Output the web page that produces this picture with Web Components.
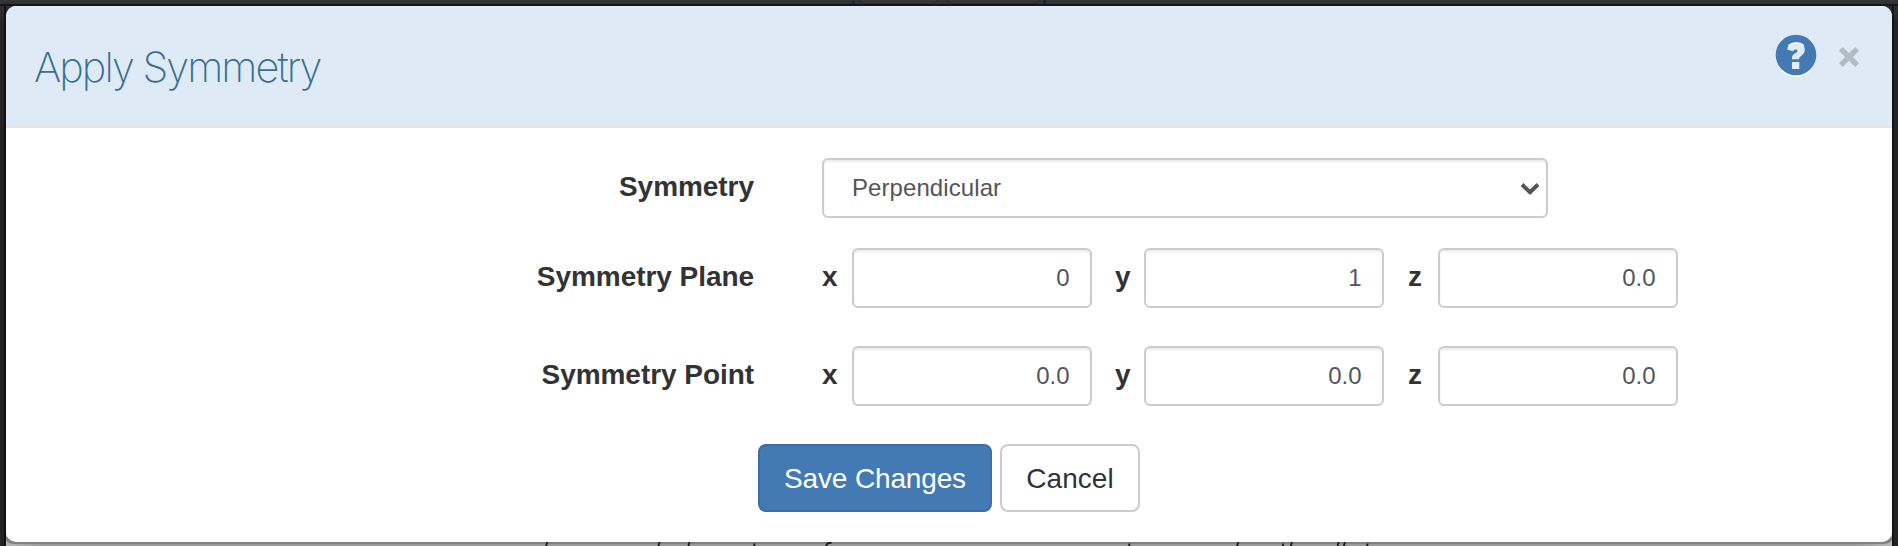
<!DOCTYPE html>
<html lang="en"><head><meta charset="utf-8"><title>Apply Symmetry</title>
<style>html,body{margin:0;width:1898px;height:546px;overflow:hidden;font-family:"Liberation Sans",Arial,sans-serif;color:#333}</style></head>
<body>
<app-backdrop>
<modal-dialog>
<span slot="title">Apply Symmetry</span>
<form-row label="Symmetry"><select-field>Perpendicular</select-field></form-row>
<form-row label="Symmetry Plane" style="--gap:30px"><axis-field axis="x" value="0"></axis-field><axis-field axis="y" value="1"></axis-field><axis-field axis="z" value="0.0"></axis-field></form-row>
<form-row label="Symmetry Point" style="--gap:38px"><axis-field axis="x" value="0.0"></axis-field><axis-field axis="y" value="0.0"></axis-field><axis-field axis="z" value="0.0"></axis-field></form-row>
<action-button slot="actions" primary style="width:234px;--ls:-.15px">Save Changes</action-button>
<action-button slot="actions" style="width:140px;--ls:.05px">Cancel</action-button>
</modal-dialog>
</app-backdrop>
<script>
const define=(name,html,init)=>customElements.define(name,class extends HTMLElement{
  connectedCallback(){if(this.shadowRoot)return;const r=this.attachShadow({mode:'open'});r.innerHTML=html;if(init)init(this,r);}
});
define('app-backdrop',`<style>
:host{display:block;box-sizing:border-box;position:relative;width:1898px;height:546px;padding:6px 6px 4px;background:linear-gradient(#323436,#232323 24px)}
svg{position:absolute;left:0;top:0}
slot{display:block;position:relative}
</style>
<svg width="1898" height="546">
<rect x="859" width="78" height="10" y="-6" rx="7" fill="#363636" stroke="#282a2b"/><rect x="947" width="92" height="10" y="-6" rx="7" fill="#363636" stroke="#282a2b"/>
<path d="M853 1l1 4M1045 0l-1 5" stroke="#15232b" stroke-width="2"/>
<rect x="0" y="4" width="1898" height="2" fill="#171617"/>
<rect x="4" y="6" width="2" height="540" fill="#111"/><rect x="1892" y="6" width="2" height="540" fill="#141414"/>
<defs><linearGradient id="g"><stop offset="0" stop-color="#b5b5b5"/><stop offset=".02" stop-color="#999"/><stop offset=".98" stop-color="#999"/><stop offset="1" stop-color="#b8b8b8"/></linearGradient></defs>
<rect x="6" y="530" width="1886" height="16" fill="url(#g)"/><rect x="6" y="534" width="1886" height="10" rx="8" fill="#808080"/>
<path d="M547.3 542l-1.2 4M659.6 542l-1.2 4M689.6 542l-1.2 4M754.8 543.5l-.8 2.5M1129.7 543.5l-.8 2.5M1238.3 542l-1.2 4M1283.5 543.5l-.8 2.5M1292 542l-1.2 4M1338.8 542l-1.2 4M1345 542l-1.2 4M1367.8 543.5l-.8 2.5M826 546q1.5-4 5.500-3" fill="none" stroke="#1c1c1c" stroke-width="1.900"/>
</svg><slot></slot>`);
define('modal-dialog',`<style>
:host{display:block;width:1886px;height:536px;background:#fff;border-radius:10px;overflow:hidden}
header{box-sizing:border-box;display:flex;justify-content:space-between;height:122px;padding:0 31px 0 28px;background:linear-gradient(#e4edf8,#deebf6 3px);border-bottom:2px solid #e5e3e3}
h1{margin:36px 0 0;font:250 41.500px/50px Inter,sans-serif;letter-spacing:-1.95px;color:#386f8f;white-space:nowrap}
nav{display:flex;gap:20px;padding-top:28px}
.x{margin-top:11px}
main{display:block;padding-top:30px}
footer{display:flex;gap:8px;padding:38px 0 0 752px}
</style>
<header><h1><slot name="title"></slot></h1><nav>
<svg width="42" height="44" viewBox="0 0 42 44"><circle cx="21" cy="23" r="20" fill="#fff"/><circle cx="21" cy="21" r="20.300" fill="#447ab3"/><path d="M12.300 15.800C12.600 11 16 8.600 21 8.600c5.500 0 8.800 2.700 8.800 7.300 0 5-5.700 5.800-5.700 9.300h-7.100v-1.600c0-4.400 5.500-4.300 5.500-6.700 0-2-4-2-4 .3z" fill="#deebf6"/><path d="M13.500 11.500q3-2.500 7.500-2.500 5.500 0 7.700 3" fill="none" stroke="#fff" stroke-width="1.500"/><path d="M17 28h7.300V35H17z" fill="#e4eef7"/></svg>
<svg class="x" width="24" height="24" viewBox="0 0 24 24"><path d="M3.800 3.800L20.200 20.200M20.200 3.800L3.800 20.200" stroke="#b0bdc4" stroke-width="5.400"/></svg>
</nav></header><main><slot></slot></main><footer><slot name="actions"></slot></footer>`);
define('form-row',`<style>
:host{display:grid;grid-template-columns:748px 1fr;column-gap:68px;height:60px;margin-top:var(--gap,0)}
label{text-align:right;font-size:28px;font-weight:700;line-height:58px;letter-spacing:-.05px;white-space:nowrap}
div{display:flex}
</style><label></label><div><slot></slot></div>`,(h,r)=>r.querySelector('label').textContent=h.getAttribute('label'));
const field=`box-sizing:border-box;height:60px;border:2px solid #ccc;border-radius:6px;background:#fff;box-shadow:inset 0 2px 2px rgba(0,0,0,.075);color:#555;font-size:24px;line-height:56px`;
define('select-field',`<style>
:host{display:flex;justify-content:space-between;width:726px;padding:0 6px 0 28px;letter-spacing:.08px;${field}}
svg{margin-top:22px}
</style><span><slot></slot></span><svg width="20" height="14" viewBox="0 0 20 14"><path d="M2 2.500l8 7.700 8-7.700" fill="none" stroke="#555" stroke-width="4"/></svg>`);
define('axis-field',`<style>
:host{display:flex;width:293px}
b{width:30px;font-size:28px;line-height:58px}
:host(:not([axis=x])) b{width:29px}
:host([axis=z]){margin-left:1px}
:host([axis=z]) b{text-indent:-1px}
div{width:240px;padding-right:20.500px;text-align:right;${field}}
</style><b></b><div></div>`,(h,r)=>{r.querySelector('b').textContent=h.getAttribute('axis');r.querySelector('div').textContent=h.getAttribute('value')});
define('action-button',`<style>
:host{box-sizing:border-box;display:block;height:68px;border:2px solid #ccc;border-radius:8px;background:#fff;text-align:center;font-size:28px;line-height:65px;letter-spacing:var(--ls);white-space:nowrap}
:host([primary]){background:#447ab3;border-color:#3b6ea5;color:#fff}
</style><slot></slot>`);
</script></body></html>
